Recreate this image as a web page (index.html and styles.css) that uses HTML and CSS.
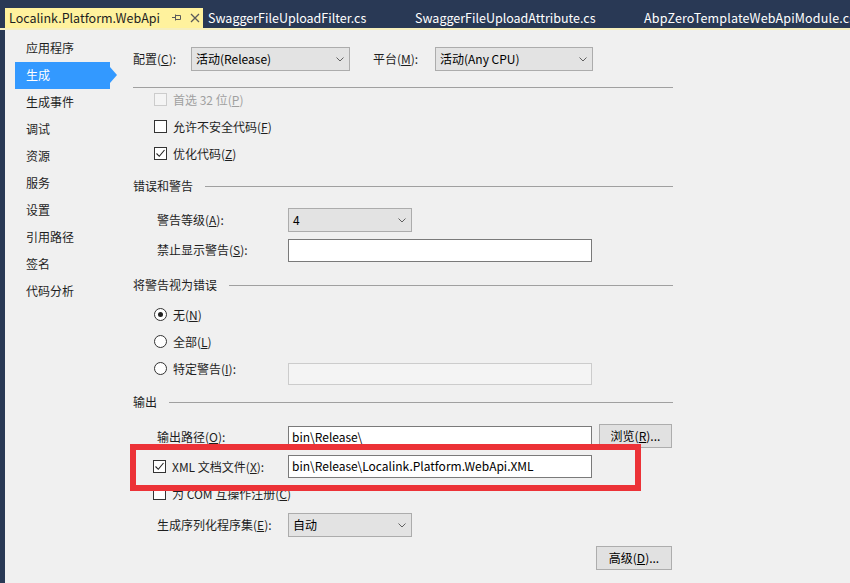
FILE: index.html
```html
<!DOCTYPE html>
<html>
<head>
<meta charset="utf-8">
<link rel="stylesheet" href="styles.css">
</head>
<body>
<div class="app">
  <div class="tabbar">
    <div class="tab active">
      <span class="tab-title">Localink.Platform.WebApi</span>
      <svg class="pin" width="9" height="9" viewBox="0 0 9 9"><path d="M0 4.5H3M3.5 1.5V7.5M3.5 2.5H8.5V6.5H3.5" fill="none" stroke="#5a5a5a" stroke-width="1"/></svg>
      <svg class="close" width="10" height="10" viewBox="0 0 10 10"><path d="M1 1L9 9M9 1L1 9" stroke="#5a5a5a" stroke-width="1.3"/></svg>
    </div>
    <div class="tab t2">SwaggerFileUploadFilter.cs</div>
    <div class="tab t3">SwaggerFileUploadAttribute.cs</div>
    <div class="tab t4">AbpZeroTemplateWebApiModule.cs</div>
  </div>
  <div class="body">
    <nav class="sidebar">
      <div class="nav-item">应用程序</div>
      <div class="nav-item sel">生成</div>
      <div class="nav-item">生成事件</div>
      <div class="nav-item">调试</div>
      <div class="nav-item">资源</div>
      <div class="nav-item">服务</div>
      <div class="nav-item">设置</div>
      <div class="nav-item">引用路径</div>
      <div class="nav-item">签名</div>
      <div class="nav-item">代码分析</div>
    </nav>
    <main class="main">
      <div class="row cfg">
        <span class="lbl cfg-lbl">配置(<u>C</u>):</span>
        <div class="select w159"><span>活动(Release)</span><svg class="chev" width="8" height="5" viewBox="0 0 8 5"><path d="M0.5 0.5L4 4L7.5 0.5" fill="none" stroke="#606060"/></svg></div>
        <span class="lbl plat-lbl">平台(<u>M</u>):</span>
        <div class="select w158"><span>活动(Any CPU)</span><svg class="chev" width="8" height="5" viewBox="0 0 8 5"><path d="M0.5 0.5L4 4L7.5 0.5" fill="none" stroke="#606060"/></svg></div>
      </div>
      <div class="sep"></div>
      <div class="checks">
        <div class="chk disabled"><span class="box"></span>首选 32 位(<u>P</u>)</div>
        <div class="chk"><span class="box"></span>允许不安全代码(<u>F</u>)</div>
        <div class="chk"><span class="box"><svg width="11" height="11" viewBox="0 0 11 11"><path d="M1.5 5.5L4.3 8.3L9.5 2" fill="none" stroke="#222" stroke-width="1.1"/></svg></span>优化代码(<u>Z</u>)</div>
      </div>

      <div class="grp-h g1"><span>错误和警告</span></div>
      <div class="fields">
        <div class="frow r-level"><span class="flbl">警告等级(<u>A</u>):</span><div class="select w124"><span>4</span><svg class="chev" width="8" height="5" viewBox="0 0 8 5"><path d="M0.5 0.5L4 4L7.5 0.5" fill="none" stroke="#606060"/></svg></div></div>
        <div class="frow r-suppress"><span class="flbl">禁止显示警告(<u>S</u>):</span><div class="input w304"></div></div>
      </div>

      <div class="grp-h g2"><span>将警告视为错误</span></div>
      <div class="radios">
        <div class="rad"><span class="circle on"></span>无(<u>N</u>)</div>
        <div class="rad"><span class="circle"></span>全部(<u>L</u>)</div>
        <div class="rad-row">
          <div class="rad rad-lbl"><span class="circle"></span>特定警告(<u>I</u>):</div>
          <div class="input disabled w304 spec"></div>
        </div>
      </div>

      <div class="grp-h g3"><span>输出</span></div>
      <div class="fields">
        <div class="frow r-out"><span class="flbl">输出路径(<u>O</u>):</span><div class="input w304 outpath">bin\Release\</div><div class="btn browse">浏览(<u>R</u>)...</div></div>
      </div>
      <div class="checks2">
        <div class="xrow"><div class="chk xml"><span class="box"><svg width="11" height="11" viewBox="0 0 11 11"><path d="M1.5 5.5L4.3 8.3L9.5 2" fill="none" stroke="#222" stroke-width="1.1"/></svg></span>XML 文档文件(<u>X</u>):</div><div class="input w304">bin\Release\Localink.Platform.WebApi.XML</div></div>
        <div class="chk com"><span class="box"></span>为 COM 互操作注册(<u>C</u>)</div>
      </div>
      <div class="fields">
        <div class="frow r-ser"><span class="flbl">生成序列化程序集(<u>E</u>):</span><div class="select w124"><span>自动</span><svg class="chev" width="8" height="5" viewBox="0 0 8 5"><path d="M0.5 0.5L4 4L7.5 0.5" fill="none" stroke="#606060"/></svg></div></div>
      </div>
      <div class="adv-row"><div class="btn adv">高级(<u>D</u>)...</div></div>

      <div class="highlight"></div>
    </main>
  </div>
</div>
</body>
</html>
```

FILE: styles.css
```css
* { box-sizing: border-box; }
html, body { margin: 0; padding: 0; }
body {
  width: 850px;
  height: 583px;
  overflow: hidden;
  background: #f0f0f0;
  font-family: "Noto Sans CJK SC", "Microsoft YaHei", sans-serif;
  font-size: 12px;
  color: #1e1e1e;
}
u { text-decoration: underline; text-underline-offset: 1px; }

.app { display: flex; flex-direction: column; height: 583px; }

/* tab bar */
.tabbar {
  flex: none;
  height: 30px;
  background: #293955;
  border-bottom: 2px solid #f6efbe;
  padding-left: 5px;
  display: flex;
  align-items: flex-end;
}
.tab {
  flex: none;
  height: 20px;
  display: flex;
  align-items: center;
  padding-left: 4px;
  padding-bottom: 1px;
  color: #ffffff;
  font-size: 12.5px;
  white-space: nowrap;
  overflow: hidden;
}
.tab.active { width: 198px; background: #fff29d; color: #1e1e1e; }
.tab-title { flex: none; }
.pin { margin-left: 12px; flex: none; }
.close { margin-left: 9px; flex: none; }
.t2 { width: 207px; padding-left: 5px; }
.t3 { width: 229px; padding-left: 5px; }
.t4 { flex: 1; padding-left: 5px; letter-spacing: 0.15px; }

/* body */
.body {
  flex: 1;
  display: flex;
  border-left: 5px solid #293955;
}
.sidebar {
  flex: none;
  width: 128px;
  padding-top: 5px;
  padding-left: 10px;
}
.nav-item {
  position: relative;
  width: 95px;
  height: 27px;
  line-height: 25px;
  padding-bottom: 2px;
  padding-left: 11px;
}
.nav-item.sel { background: #3399ff; color: #ffffff; }
.nav-item.sel::after {
  content: "";
  position: absolute;
  right: -7px;
  top: 5px;
  border-left: 7px solid #3399ff;
  border-top: 8px solid transparent;
  border-bottom: 8px solid transparent;
}

.main {
  position: relative;
  flex: none;
  width: 540px;
  padding-top: 17px;
}

.row { display: flex; align-items: center; }
.cfg { height: 24px; }
.lbl { flex: none; padding-bottom: 2px; }
.cfg-lbl { width: 58px; }
.plat-lbl { width: 62px; margin-left: 23px; }

.select {
  flex: none;
  height: 24px;
  background: #e3e3e3;
  border: 1px solid #acacac;
  display: flex;
  align-items: center;
  justify-content: space-between;
  padding: 0 5px 2px 4px;
  color: #000;
}
.chev { flex: none; margin-top: 2px; }
.w159 { width: 159px; }
.w158 { width: 158px; }
.w124 { width: 124px; }
.w304 { width: 304px; }

.input {
  flex: none;
  height: 23px;
  background: #ffffff;
  border: 1px solid #7a7a7a;
  padding-left: 3px;
  line-height: 19px;
  color: #000;
  white-space: nowrap;
}
.input.disabled { background: #f4f4f4; border-color: #cccccc; }

.sep { border-top: 1px solid #a0a0a0; margin-top: 16px; }

.checks {
  margin-top: 1px;
  padding-left: 21px;
  display: flex;
  flex-direction: column;
  gap: 5px;
}
.chk { height: 22px; display: flex; align-items: center; }
.chk, .rad { padding-bottom: 1px; }
.box {
  flex: none;
  width: 13px;
  height: 13px;
  border: 1px solid #333333;
  background: #ffffff;
  margin-right: 6px;
  display: flex;
  align-items: center;
  justify-content: center;
}
.chk.disabled { color: #a0a0a0; }
.chk.disabled .box { border-color: #cccccc; background: #f4f4f4; }

.grp-h { height: 20px; display: flex; align-items: center; padding-bottom: 2px; }
.grp-h::after {
  content: "";
  flex: 1;
  border-top: 1px solid #a0a0a0;
  margin-left: 12px;
  margin-top: 2px;
}
.g1 { margin-top: 11px; }
.g2 { margin-top: 13px; }
.g3 { margin-top: 7px; }

.fields { padding-left: 24px; }
.frow { display: flex; align-items: center; }
.flbl { flex: none; width: 131px; padding-bottom: 2px; }
.r-level { margin-top: 12px; }
.r-suppress { margin-top: 7px; }

.radios {
  margin-top: 9px;
  padding-left: 21px;
  display: flex;
  flex-direction: column;
  gap: 5px;
}
.rad { height: 22px; display: flex; align-items: center; }
.circle {
  flex: none;
  width: 13px;
  height: 13px;
  border: 1px solid #333333;
  border-radius: 50%;
  background: #ffffff;
  margin-right: 6px;
  display: flex;
  align-items: center;
  justify-content: center;
}
.circle.on::before {
  content: "";
  width: 5px;
  height: 5px;
  border-radius: 50%;
  background: #222222;
}
.rad-row { display: flex; align-items: flex-start; }
.rad-lbl { width: 134px; flex: none; }
.spec { margin-top: 5px; height: 22px; }

.r-out { margin-top: 12px; align-items: flex-start; height: 25px; }
.r-out .flbl { line-height: 25px; }
.outpath { margin-top: 2px; }
.btn {
  flex: none;
  height: 24px;
  background: #e1e1e1;
  border: 1px solid #adadad;
  display: flex;
  align-items: center;
  justify-content: center;
  padding-bottom: 2px;
  color: #000;
}
.browse { width: 73px; margin-left: 7px; }

.checks2 { padding-left: 20px; }
.xrow { margin-top: 6px; display: flex; align-items: center; }
.chk.xml { width: 135px; height: 23px; }
.chk.com { margin-top: 5px; }

.r-ser { margin-top: 8px; }
.adv-row { margin-top: 9px; display: flex; justify-content: flex-end; padding-right: 1px; }
.adv { width: 76px; }

.highlight {
  position: absolute;
  left: -3px;
  top: 414px;
  width: 511px;
  height: 47px;
  border: 6px solid #ec3237;
}
```
